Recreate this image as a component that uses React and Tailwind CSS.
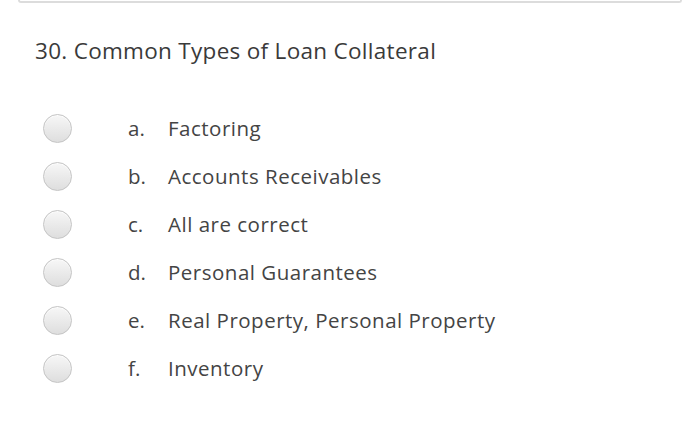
import React from "react";

const options = [
  { letter: "a.", text: "Factoring" },
  { letter: "b.", text: "Accounts Receivables" },
  { letter: "c.", text: "All are correct" },
  { letter: "d.", text: "Personal Guarantees" },
  { letter: "e.", text: "Real Property, Personal Property" },
  { letter: "f.", text: "Inventory" },
];

const App = () => {
  return (
    <div
      className="w-[700px] h-[448px] bg-white overflow-hidden"
      style={{ fontFamily: '"Open Sans", "Noto Sans", sans-serif' }}
    >
      <div className="mx-[18px] h-[3px] border-b-2 border-x-2 border-[#dcdcdc] rounded-b-md" />
      <h1 className="mt-[33px] ml-[35px] text-[22.5px] leading-[30px] text-[#3a3a3a] tracking-[0.3px]">
        30. Common Types of Loan Collateral
      </h1>
      <div className="mt-[38px] flex flex-col">
        {options.map((opt) => (
          <div key={opt.letter} className="flex items-center h-[48px]">
            <div className="ml-[43px] w-[29px] h-[29px] rounded-full border border-[#c4c4c4] bg-gradient-to-b from-[#f7f7f7] to-[#dedede] shadow-[inset_0_1px_1px_rgba(255,255,255,0.8)]" />
            <span className="ml-[56px] w-[40px] text-[20.5px] text-[#444]">{opt.letter}</span>
            <span className="text-[20.5px] text-[#444] tracking-[0.5px]">{opt.text}</span>
          </div>
        ))}
      </div>
    </div>
  );
};

export default App;
